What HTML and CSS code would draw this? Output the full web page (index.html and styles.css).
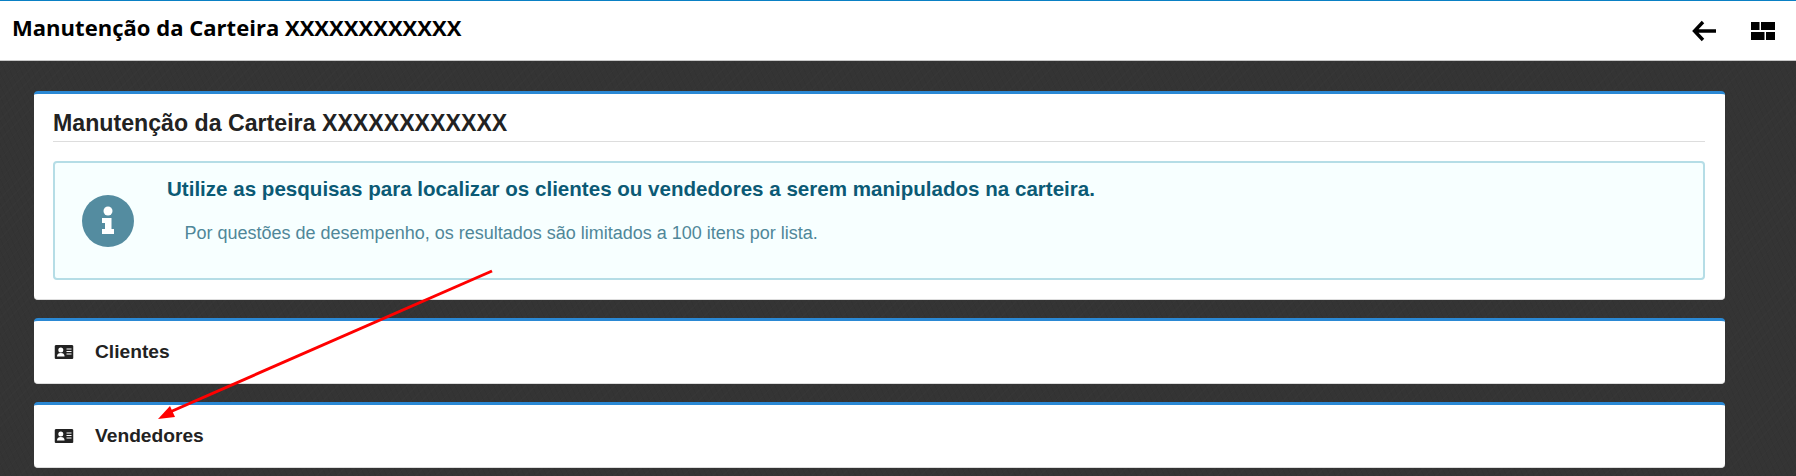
FILE: index.html
```html
<!DOCTYPE html>
<html lang="pt-BR">
<head>
<meta charset="utf-8">
<title>Manutenção da Carteira</title>
<link rel="stylesheet" href="styles.css">
</head>
<body>
<header class="topbar">
  <h1 class="topbar-title">Manutenção da Carteira XXXXXXXXXXXX</h1>
  <div class="topbar-actions">
    <svg class="icon-back" width="24" height="22" viewBox="0 0 24 22"><path d="M11 2 2.500 11l8.500 9M3 11h21" fill="none" stroke="#000" stroke-width="3.400"/></svg>
    <svg class="icon-grid" width="24" height="18" viewBox="0 0 24 18"><path d="M0 0h8.500v8H0zM10 0h14v8H10zM0 10h13.500v8H0zM15 10h9v8h-9z" fill="#000"/></svg>
  </div>
</header>
<main class="content">
  <section class="panel panel-main">
    <h2 class="panel-title">Manutenção da Carteira XXXXXXXXXXXX</h2>
    <div class="alert">
      <div class="alert-icon">
        <svg width="52" height="52" viewBox="0 0 52 52"><circle cx="26" cy="26" r="26" fill="#548ca0"/><circle cx="26" cy="16" r="4.500" fill="#fff"/><path d="M20 23h9.500v11H32v5H20v-5h3v-6h-3z" fill="#fff"/></svg>
      </div>
      <div class="alert-body">
        <h3 class="alert-title">Utilize as pesquisas para localizar os clientes ou vendedores a serem manipulados na carteira.</h3>
        <p class="alert-text">Por questões de desempenho, os resultados são limitados a 100 itens por lista.</p>
      </div>
    </div>
  </section>
  <section class="panel panel-row">
    <svg class="icon-card" width="20" height="14" viewBox="0 0 19 14"><use href="#card"/></svg>
    <span class="row-label">Clientes</span>
  </section>
  <section class="panel panel-row">
    <svg class="icon-card" width="20" height="14" viewBox="0 0 19 14"><use href="#card"/></svg>
    <span class="row-label">Vendedores</span>
  </section>
</main>
<svg class="defs" width="0" height="0">
  <symbol id="card" viewBox="0 0 19 14">
    <rect width="19" height="14" rx="1.500" fill="#222"/>
    <circle cx="6.300" cy="5" r="2.500" fill="#fff"/>
    <path d="M2.500 11.500c0-2.500 1.500-3.500 3.800-3.500s3.800 1 3.800 3.500z" fill="#fff"/>
    <path d="M12 4h5M12 6.500h5M12 9h5" stroke="#fff" stroke-width="1.100"/>
  </symbol>
</svg>
<svg class="annotation" width="1796" height="476" viewBox="0 0 1796 476">
  <line x1="492" y1="271" x2="170" y2="412" stroke="#f00" stroke-width="3"/>
  <path d="M158 419 170 406 175 417z" fill="#f00"/>
</svg>
</body>
</html>
```
FILE: styles.css
```css
* { box-sizing: border-box; }
html, body { margin: 0; height: 476px; overflow: hidden; }
body {
  position: relative;
  font-family: "Liberation Sans", Arial, sans-serif;
  background-color: #343434;
  background-image:
    repeating-linear-gradient(135deg, rgba(255,255,255,0.012) 0 1px, transparent 1px 7px),
    repeating-linear-gradient(65deg, rgba(0,0,0,0.035) 0 1px, transparent 1px 5px);
}
.topbar {
  height: 61px;
  background: #fff;
  border-top: 1px solid #0a80c4;
  border-bottom: 1px solid #c8c8c8;
  display: flex;
  align-items: center;
  justify-content: space-between;
  padding: 0 21px 0 12px;
}
.topbar-title {
  margin: 0 0 8px;
  font-family: "Open Sans", sans-serif;
  font-size: 22.050px;
  font-weight: 700;
  color: #000;
}
.topbar-actions { display: flex; align-items: center; gap: 35px; }
.icon-back, .icon-grid { display: block; }
.content {
  padding: 30px 71px 0 34px;
  display: flex;
  flex-direction: column;
  gap: 18px;
}
.panel {
  background: #fff;
  border-top: 3px solid #2a88d4;
  border-bottom: 1px solid #ddd;
  border-radius: 4px;
}
.panel-main { height: 209px; padding: 0 20px 0 19px; }
.panel-title {
  margin: 0;
  height: 48px;
  padding-top: 16px;
  border-bottom: 1px solid #ddd;
  font-size: 23.170px;
  line-height: 26px;
  font-weight: 700;
  color: #222;
}
.alert {
  margin-top: 19px;
  height: 119px;
  background: #f7ffff;
  border: 2px solid #b5dde6;
  border-radius: 4px;
  display: flex;
  align-items: flex-start;
}
.alert-icon { margin: 32px 0 0 27px; width: 52px; }
.alert-icon svg { display: block; }
.alert-body { margin-left: 33px; }
.alert-title {
  margin: 14px 0 0;
  font-size: 20.570px;
  line-height: 24px;
  font-weight: 700;
  color: #0b5a75;
}
.alert-text {
  margin: 20px 0 0 17.500px;
  font-size: 18px;
  line-height: 24px;
  color: #4f8799;
}
.panel-row {
  height: 66px;
  display: flex;
  align-items: center;
  padding: 0 0 0 20px;
}
.icon-card { display: block; }
.row-label {
  margin-left: 21px;
  font-size: 19.200px;
  font-weight: 700;
  color: #222;
}
.defs { position: absolute; }
.annotation { position: absolute; left: 0; top: 0; pointer-events: none; }
```
